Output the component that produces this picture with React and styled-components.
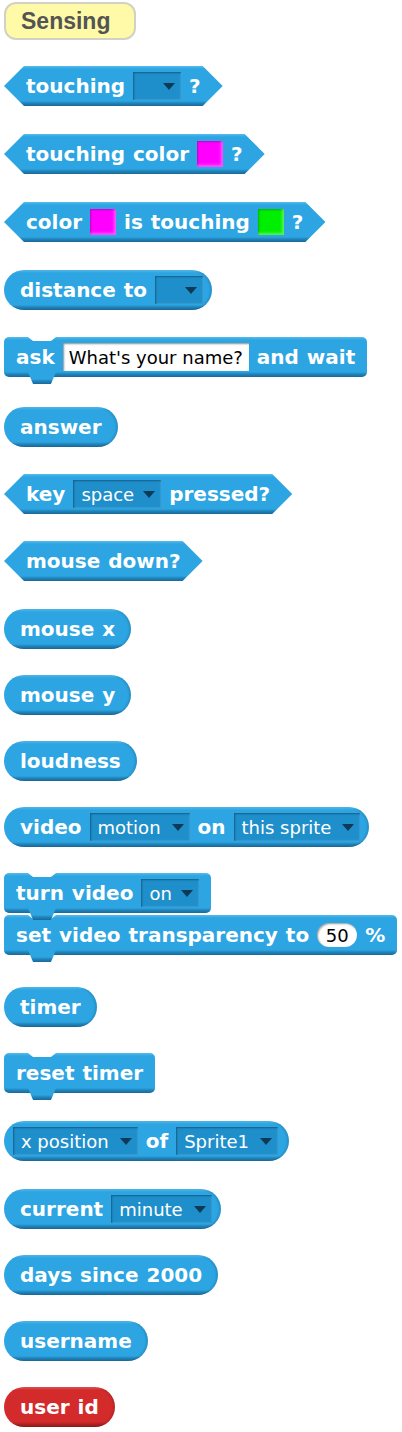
import React from 'react';
import styled, { createGlobalStyle, css } from 'styled-components';

const GlobalStyle = createGlobalStyle`
  body {
    margin: 0;
    background: #ffffff;
    font-family: 'DejaVu Sans', Verdana, sans-serif;
  }
`;

const BLUE = {
  hi: '#55bbee',
  base: '#2ca5e2',
  lo: '#2185bc',
  edge: '#19699a',
};

const RED = {
  hi: '#e25656',
  base: '#d32b2b',
  lo: '#b12222',
  edge: '#8c1a1a',
};

const shade = (c) => css`
  background: linear-gradient(
    to bottom,
    ${c.hi} 0px,
    ${c.base} 3px,
    ${c.base} calc(100% - 5px),
    ${c.lo} calc(100% - 3px),
    ${c.edge} 100%
  );
`;

const Page = styled.div`
  display: flex;
  flex-direction: column;
  align-items: flex-start;
  padding: 2px 0 0 4px;
`;

const Category = styled.div`
  box-sizing: border-box;
  width: 132px;
  height: 38px;
  display: flex;
  align-items: center;
  padding-left: 15px;
  background: #fffaa8;
  border: 2px solid #d2d2c4;
  border-radius: 12px;
  color: #545454;
  font-family: 'Liberation Sans', Arial, sans-serif;
  font-weight: bold;
  font-size: 23px;
`;

const blockBase = css`
  position: relative;
  box-sizing: border-box;
  height: 40px;
  display: flex;
  align-items: center;
  gap: 8px;
  margin-top: ${(p) => p.$mt || 0}px;
  ${(p) => shade(p.$red ? RED : BLUE)};
`;

const Boolean = styled.div`
  ${blockBase};
  padding: 0 22px;
  clip-path: polygon(
    20px 0,
    calc(100% - 20px) 0,
    100% 50%,
    calc(100% - 20px) 100%,
    20px 100%,
    0 50%
  );
`;

// reporters that start or end with a menu sit closer to the rounded edge
const Reporter = styled.div`
  ${blockBase};
  border-radius: 20px;
  box-shadow: inset -2px 0 2px rgba(0, 0, 0, 0.12);
  padding-left: ${(p) => p.$padL ?? 16}px;
  padding-right: ${(p) => p.$padR ?? 16}px;
`;

const Command = styled.div`
  ${blockBase};
  padding: 0 12px;
  border-radius: 5px;

  &::before {
    content: '';
    position: absolute;
    left: 24px;
    top: 0;
    width: 28px;
    height: 4px;
    background: #ffffff;
    clip-path: polygon(0 0, 100% 0, 82% 100%, 18% 100%);
    z-index: 1;
  }

  &::after {
    content: '';
    position: absolute;
    left: 24px;
    bottom: -7px;
    width: 28px;
    height: 12px;
    background: linear-gradient(
      to bottom,
      ${BLUE.base} 0px,
      ${BLUE.base} 7px,
      ${BLUE.lo} 9px,
      ${BLUE.edge} 100%
    );
    clip-path: polygon(0 0, 100% 0, 82% 100%, 18% 100%);
    z-index: 2;
  }
`;

const Label = styled.span`
  color: #ffffff;
  font-family: 'DejaVu Sans', Verdana, sans-serif;
  font-weight: bold;
  font-size: 20px;
  word-spacing: 1px;
  white-space: pre;
`;

const Dropdown = styled.div`
  box-sizing: border-box;
  height: 28px;
  min-width: 48px;
  display: flex;
  align-items: center;
  justify-content: space-between;
  gap: ${(p) => (p.$short ? 9 : 11)}px;
  padding: 0 6px 0 8px;
  background: #1f8fcb;
  box-shadow: inset 1px 1px 2px rgba(0, 0, 0, 0.35),
    inset -1px -1px 1px rgba(255, 255, 255, 0.12);
  color: #ffffff;
  font-family: 'DejaVu Sans', Verdana, sans-serif;
  font-size: 18px;
  white-space: pre;
`;

const Arrow = styled.span`
  width: 0;
  height: 0;
  border-left: 6.5px solid transparent;
  border-right: 6.5px solid transparent;
  border-top: 7px solid #0c3a57;
  margin-left: auto;
`;

const Swatch = styled.div`
  width: 26px;
  height: 26px;
  background: ${(p) => p.$color};
  box-shadow: inset -2px -2px 3px rgba(255, 255, 255, 0.35),
    inset 1px 1px 2px rgba(0, 0, 0, 0.25);
`;

const TextInput = styled.div`
  box-sizing: border-box;
  height: 28px;
  display: flex;
  align-items: center;
  padding: 0 6px;
  background: #ffffff;
  box-shadow: inset 1px 1px 2px rgba(0, 0, 0, 0.45);
  color: #000000;
  font-family: 'DejaVu Sans', Verdana, sans-serif;
  font-size: 18px;
  white-space: pre;
`;

const NumberPill = styled.div`
  box-sizing: border-box;
  height: 24px;
  min-width: 40px;
  display: flex;
  align-items: center;
  justify-content: center;
  padding: 0 8px;
  background: #ffffff;
  border-radius: 12px;
  box-shadow: inset 1px 1px 2px rgba(0, 0, 0, 0.4);
  color: #000000;
  font-family: 'DejaVu Sans', Verdana, sans-serif;
  font-size: 18px;
`;

const Menu = ({ children, short }) => (
  <Dropdown $short={short}>
    {children && <span>{children}</span>}
    <Arrow />
  </Dropdown>
);

const App = () => {
  return (
    <>
      <GlobalStyle />
      <Page>
        <Category>Sensing</Category>

        <Boolean $mt={26}>
          <Label>touching</Label>
          <Menu />
          <Label>?</Label>
        </Boolean>

        <Boolean $mt={28}>
          <Label>touching color</Label>
          <Swatch $color="#ff00ff" />
          <Label>?</Label>
        </Boolean>

        <Boolean $mt={28}>
          <Label>color</Label>
          <Swatch $color="#ff00ff" />
          <Label>is touching</Label>
          <Swatch $color="#00ee00" />
          <Label>?</Label>
        </Boolean>

        <Reporter $mt={28} $padR={9}>
          <Label>distance to</Label>
          <Menu />
        </Reporter>

        <Command $mt={27}>
          <Label>ask</Label>
          <TextInput>What's your name?</TextInput>
          <Label>and wait</Label>
        </Command>

        <Reporter $mt={30}>
          <Label>answer</Label>
        </Reporter>

        <Boolean $mt={27}>
          <Label>key</Label>
          <Menu short>space</Menu>
          <Label>pressed?</Label>
        </Boolean>

        <Boolean $mt={27}>
          <Label>mouse down?</Label>
        </Boolean>

        <Reporter $mt={28}>
          <Label>mouse x</Label>
        </Reporter>

        <Reporter $mt={26}>
          <Label>mouse y</Label>
        </Reporter>

        <Reporter $mt={26}>
          <Label>loudness</Label>
        </Reporter>

        <Reporter $mt={26} $padR={9}>
          <Label>video</Label>
          <Menu>motion</Menu>
          <Label>on</Label>
          <Menu>this sprite</Menu>
        </Reporter>

        <Command $mt={26}>
          <Label>turn video</Label>
          <Menu short>on</Menu>
        </Command>

        <Command $mt={2}>
          <Label>set video transparency to</Label>
          <NumberPill>50</NumberPill>
          <Label>%</Label>
        </Command>

        <Reporter $mt={32}>
          <Label>timer</Label>
        </Reporter>

        <Command $mt={26}>
          <Label>reset timer</Label>
        </Command>

        <Reporter $mt={28} $padL={9} $padR={11}>
          <Menu>x position</Menu>
          <Label>of</Label>
          <Menu>Sprite1</Menu>
        </Reporter>

        <Reporter $mt={28} $padR={9}>
          <Label>current</Label>
          <Menu>minute</Menu>
        </Reporter>

        <Reporter $mt={26}>
          <Label>days since 2000</Label>
        </Reporter>

        <Reporter $mt={26}>
          <Label>username</Label>
        </Reporter>

        <Reporter $mt={26} $red>
          <Label>user id</Label>
        </Reporter>
      </Page>
    </>
  );
};

export default App;
